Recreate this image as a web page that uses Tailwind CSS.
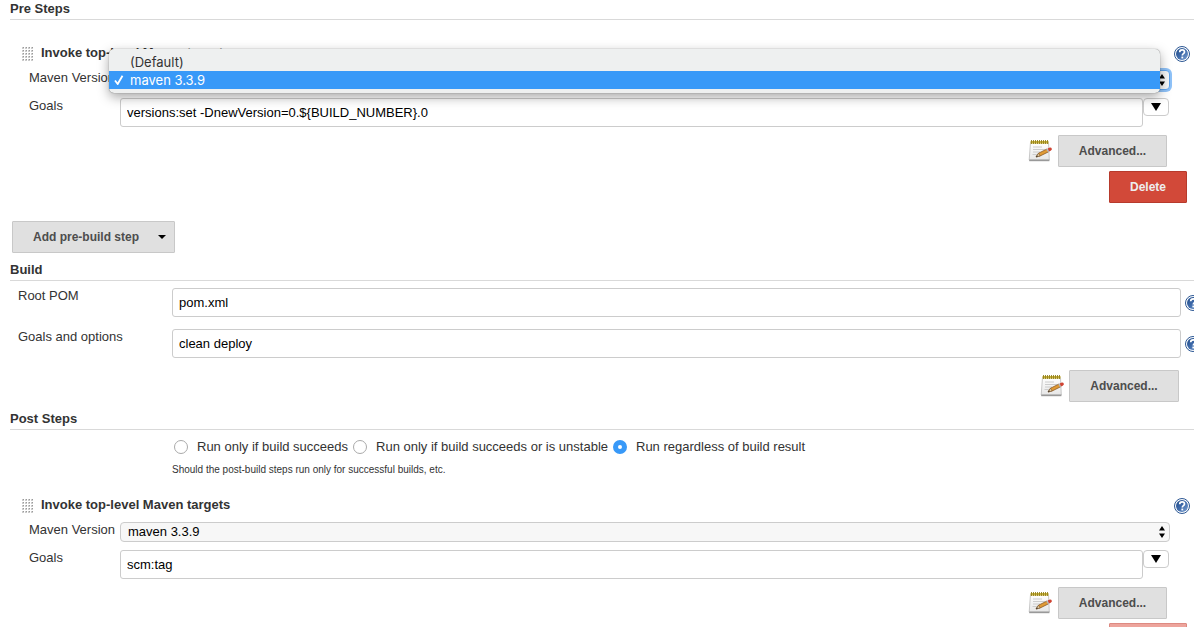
<!DOCTYPE html>
<html lang="en">
<head>
<meta charset="utf-8">
<title>Job configuration</title>
<script src="https://cdn.jsdelivr.net/npm/@tailwindcss/browser@4"></script>
</head>
<body class="h-screen overflow-hidden bg-white font-['Liberation_Sans',Arial,sans-serif] text-[13px] leading-4 text-[#333]">
<svg class="absolute size-0" aria-hidden="true">
  <defs>
    <linearGradient id="ball" x1="0" y1="0" x2="1" y2="1"><stop offset="0" stop-color="#1f4a87"/><stop offset=".5" stop-color="#3f6bab"/><stop offset="1" stop-color="#7fa3d2"/></linearGradient>
    <linearGradient id="paper" x1="0" y1="0" x2="0" y2="1"><stop offset="0" stop-color="#fff"/><stop offset="1" stop-color="#e6e6e6"/></linearGradient>
    <pattern id="dots" width="3" height="3" patternUnits="userSpaceOnUse"><rect width="2" height="2" fill="#ccc"/><rect x="1" width="1" height="1" fill="#999"/></pattern>
    <symbol id="help" viewBox="0 0 16 16">
      <circle cx="8" cy="8" r="7.5" fill="#fff" stroke="#2d5894"/>
      <circle cx="8" cy="8" r="6" fill="url(#ball)"/>
      <path d="M5.7 6.3C5.7 4.7 6.7 3.9 8.1 3.9s2.4.8 2.4 2.1c0 1.7-2.2 1.7-2.2 3.5" fill="none" stroke="#fff" stroke-width="1.7"/>
      <rect x="7.4" y="10.6" width="1.8" height="1.8" fill="#fff"/>
    </symbol>
    <symbol id="notepad" viewBox="0 0 24 24">
      <path d="M2.5 3.5h18l.8 17.5H1.2z" fill="url(#paper)" stroke="#bbb" stroke-width=".8"/>
      <path d="M1.2 20.6h20.2v1.6H1.2z" fill="#999"/>
      <path d="M2.5 2h18v2.6h-18z" fill="#c9b23c"/>
      <path d="M3.5 1v4M5.5 1v4M7.5 1v4M9.5 1v4M11.5 1v4M13.5 1v4M15.5 1v4M17.5 1v4M19.5 1v4" stroke="#92801c" stroke-width=".9"/>
      <path d="M5 8h9M5 10.5h12M5 13h7M4.500 15.500h5" stroke="#ccc"/>
      <path d="M8 18l2.500-3.800 8.500-4.200 1.600 2.800-8.500 4.200z" fill="#e09a35" stroke="#7d4a18" stroke-width=".7"/>
      <path d="M8 18l2.500-3.800 1.600 2.800z" fill="#e6cfa3" stroke="#6b4a2a" stroke-width=".5"/>
      <path d="M8 18l1.100-1.700.7 1.200z" fill="#222"/>
      <path d="M18.300 10.300l1.300-.7 1.600 2.800-1.300.7z" fill="#b9bec4"/>
      <path d="M19.600 9.600l2.200-1q1.600-.2 2 1.200.2 1-.6 1.500l-2 1.100z" fill="#cf4332"/>
    </symbol>
    <symbol id="updown" viewBox="0 0 6 12"><path d="M3 0l3 4.500H0zM3 12L0 7.500h6z"/></symbol>
    <symbol id="grip" viewBox="0 0 12 14"><rect width="12" height="14" fill="url(#dots)"/></symbol>
  </defs>
</svg>

<main>
  <h2 class="ml-2.5 h-5 border-b border-[#d9d9d9] pt-px font-bold">Pre Steps</h2>

  <section class="relative pt-6 pl-[22px]">
    <div class="flex h-5 items-center pr-1">
      <svg class="mr-[7px] h-3.5 w-3"><use href="#grip"/></svg>
      <h3 class="flex-1 pb-0.5 font-bold">Invoke top-level Maven targets</h3>
      <button type="button" aria-label="Help for Maven targets" class="size-4"><svg class="size-4"><use href="#help"/></svg></button>
    </div>
    <div class="mt-1.5 flex items-start pr-6">
      <label for="pre-version" class="w-[98px] pl-[7px]">Maven Version</label>
      <div class="grid flex-1 items-center">
        <select id="pre-version" class="col-start-1 row-start-1 h-5 w-full appearance-none rounded border border-[#5fa5f0] bg-[#f7f7f7] px-[7px] text-black ring-2 ring-[#8fc2f8]"><option>(Default)</option><option selected>maven 3.3.9</option></select>
        <svg class="pointer-events-none col-start-1 row-start-1 mr-[5px] h-3 w-1.5 justify-self-end"><use href="#updown"/></svg>
      </div>
    </div>
    <div role="listbox" aria-label="Maven Version" class="absolute top-[29px] right-[34px] left-[109px] rounded-[5px] bg-[#eef0f0] pt-1 pb-1 font-[Inter,sans-serif] shadow-[0_4px_12px_rgba(0,0,0,0.35),0_0_1px_rgba(0,0,0,0.6)]">
      <div role="option" aria-selected="false" class="h-[18px] pl-[21px] leading-[18px]">(Default)</div>
      <div role="option" aria-selected="true" class="flex h-[18px] items-center bg-[#3899f8] pl-[5px] text-white">
        <svg class="mr-1.5 h-2.5 w-2.5" viewBox="0 0 10 10" fill="none" stroke="#fff" stroke-width="1.800"><path d="M1 5.500l2.700 3.500L8.500.8"/></svg>maven 3.3.9</div>
    </div>
    <div class="mt-2 flex items-start pr-[25px]">
      <label for="pre-goals" class="w-[98px] pl-[7px]">Goals</label>
      <input id="pre-goals" type="text" value="versions:set -DnewVersion=0.${BUILD_NUMBER}.0" class="h-[29px] min-w-0 flex-1 rounded-[3px] border border-[#ccc] px-1.5 text-black">
      <button type="button" aria-label="Expand goals" class="flex h-[18px] w-[26px] items-center justify-center rounded border border-[#ccc]"><svg class="h-2 w-2.5" viewBox="0 0 10 8"><path d="M0 0h10L5 8z"/></svg></button>
    </div>
    <div class="mt-2 flex items-center justify-end pr-[27px]">
      <svg class="mr-1.5 size-6"><use href="#notepad"/></svg>
      <button type="button" class="h-8 w-[109px] rounded-[1px] border border-[#c8c8c8] bg-[#e0e0e0] text-xs font-bold text-[#4d4d4d]">Advanced...</button>
    </div>
    <div class="mt-1 flex justify-end pr-[7px]">
      <button type="button" class="h-8 w-[78px] rounded-[1px] border border-[#b73a2c] bg-[#d24939] text-xs font-bold text-[#eee]">Delete</button>
    </div>
  </section>

  <div class="mt-[18px] pl-3">
    <button type="button" class="flex h-8 w-[163px] items-center rounded-[1px] border border-[#c8c8c8] bg-[#e0e0e0] pr-2 pl-5 text-xs font-bold text-[#4d4d4d]"><span class="flex-1 text-left">Add pre-build step</span><svg class="h-1 w-2" viewBox="0 0 8 4"><path d="M0 0h8L4 4z"/></svg></button>
  </div>

  <h2 class="mt-2 ml-2.5 h-5 border-b border-[#d9d9d9] pt-px font-bold">Build</h2>
  <section class="pt-[7px] pl-[18px]">
    <div class="-mr-2 flex items-start">
      <label for="pom" class="w-[154px]">Root POM</label>
      <input id="pom" type="text" value="pom.xml" class="h-[29px] min-w-0 flex-1 rounded-[3px] border border-[#ccc] px-1.5 text-black">
      <button type="button" aria-label="Help for Root POM" class="mt-[7px] mr-px ml-1 size-4"><svg class="size-4"><use href="#help"/></svg></button>
    </div>
    <div class="-mr-2 mt-3 flex items-start">
      <label for="options" class="w-[154px]">Goals and options</label>
      <input id="options" type="text" value="clean deploy" class="h-[29px] min-w-0 flex-1 rounded-[3px] border border-[#ccc] px-1.5 text-black">
      <button type="button" aria-label="Help for Goals and options" class="mt-[7px] mr-px ml-1 size-4"><svg class="size-4"><use href="#help"/></svg></button>
    </div>
    <div class="mt-3 flex items-center justify-end pr-[15px]">
      <svg class="mr-[5px] size-6"><use href="#notepad"/></svg>
      <button type="button" class="h-8 w-[110px] rounded-[1px] border border-[#c8c8c8] bg-[#e0e0e0] text-xs font-bold text-[#4d4d4d]">Advanced...</button>
    </div>
  </section>

  <h2 class="mt-2 ml-2.5 h-5 border-b border-[#d9d9d9] pt-px font-bold">Post Steps</h2>
  <fieldset class="pt-[9px] pl-[172px]">
    <div class="flex gap-[5px] pl-0.5">
      <label class="flex items-center gap-[9px]"><input type="radio" name="when" class="size-3.5 appearance-none rounded-full border border-[#aaa] bg-white">Run only if build succeeds</label>
      <label class="flex items-center gap-[9px]"><input type="radio" name="when" class="size-3.5 appearance-none rounded-full border border-[#aaa] bg-white">Run only if build succeeds or is unstable</label>
      <label class="flex items-center gap-[9px]"><input type="radio" name="when" checked class="size-3.5 appearance-none rounded-full border-5 border-[#3899f8] bg-white">Run regardless of build result</label>
    </div>
    <p class="mt-[7px] text-[10px]">Should the post-build steps run only for successful builds, etc.</p>
  </fieldset>

  <section class="pt-[18px] pl-[22px]">
    <div class="flex h-5 items-center pr-1">
      <svg class="mr-[7px] h-3.5 w-3"><use href="#grip"/></svg>
      <h3 class="flex-1 pb-0.5 font-bold">Invoke top-level Maven targets</h3>
      <button type="button" aria-label="Help for Maven targets" class="size-4"><svg class="size-4"><use href="#help"/></svg></button>
    </div>
    <div class="mt-1.5 flex items-start pr-6">
      <label for="post-version" class="w-[98px] pl-[7px]">Maven Version</label>
      <div class="grid flex-1 items-center">
        <select id="post-version" class="col-start-1 row-start-1 h-5 w-full appearance-none rounded border border-[#ccc] bg-[#f7f7f7] px-[7px] text-black"><option>(Default)</option><option selected>maven 3.3.9</option></select>
        <svg class="pointer-events-none col-start-1 row-start-1 mr-[5px] h-3 w-1.5 justify-self-end"><use href="#updown"/></svg>
      </div>
    </div>
    <div class="mt-2 flex items-start pr-[25px]">
      <label for="post-goals" class="w-[98px] pl-[7px]">Goals</label>
      <input id="post-goals" type="text" value="scm:tag" class="h-[29px] min-w-0 flex-1 rounded-[3px] border border-[#ccc] px-1.5 text-black">
      <button type="button" aria-label="Expand goals" class="flex h-[18px] w-[26px] items-center justify-center rounded border border-[#ccc]"><svg class="h-2 w-2.5" viewBox="0 0 10 8"><path d="M0 0h10L5 8z"/></svg></button>
    </div>
    <div class="mt-2 flex items-center justify-end pr-[27px]">
      <svg class="mr-1.5 size-6"><use href="#notepad"/></svg>
      <button type="button" class="h-8 w-[109px] rounded-[1px] border border-[#c8c8c8] bg-[#e0e0e0] text-xs font-bold text-[#4d4d4d]">Advanced...</button>
    </div>
    <div class="mt-1 flex justify-end pr-[7px]">
      <button type="button" class="h-8 w-[78px] rounded-[1px] border border-[#dd8a82] bg-[#eda49c] text-xs font-bold text-white">Delete</button>
    </div>
  </section>
</main>
</body>
</html>
